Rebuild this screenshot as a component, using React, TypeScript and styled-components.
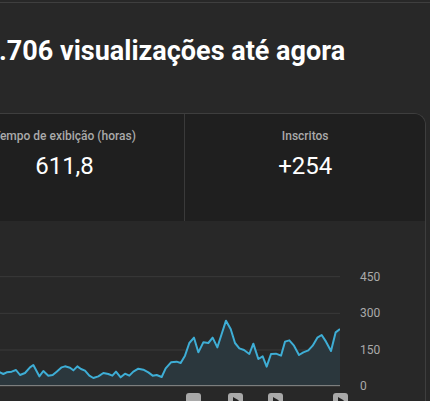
import styled, { createGlobalStyle } from "styled-components";

const GlobalStyle = createGlobalStyle`
  html, body {
    margin: 0;
    background: #282828;
  }
  body {
    font-family: Roboto, "Noto Sans", "Liberation Sans", sans-serif;
    overflow: hidden;
  }
`;

const Page = styled.div`
  width: 430px;
  height: 401px;
  overflow: hidden;
  background: #282828;
`;

const TopRule = styled.div`
  margin-top: 2px;
  border-top: 1px solid #3f3f3f;
`;

// the view is a crop of a wider page, so the column starts off-screen
const Content = styled.main`
  width: 723px;
  margin-left: -297px;
  display: flex;
  flex-direction: column;
`;

const Title = styled.h1`
  margin: 32px 0 46px;
  font-size: 27px;
  line-height: 32px;
  font-weight: 700;
  color: #fff;
  text-align: center;
  white-space: nowrap;
`;

const Card = styled.section`
  border: 1px solid #3e3e3e;
  border-bottom: none;
  border-radius: 12px 12px 0 0;
  overflow: hidden;
`;

const Metrics = styled.div`
  display: flex;
  height: 107px;
  background: #1f1f1f;
`;

const Metric = styled.div`
  flex: 1;
  padding-top: 14px;
  text-align: center;

  & + & {
    border-left: 1px solid #3a3a3a;
  }
`;

const Label = styled.div`
  font-size: 12px;
  line-height: 16px;
  font-weight: 500;
  color: #aaaaaa;
`;

const Value = styled.div`
  margin-top: 6px;
  font-size: 24px;
  line-height: 32px;
  color: #ffffff;
`;

const ChartSection = styled.div`
  display: flex;
  padding: 48px 0 0 24px;
  background: #282828;
`;

const Plot = styled.div`
  display: flex;
  flex-direction: column;
  width: 612px;
`;

const Axis = styled.div`
  display: flex;
  flex-direction: column;
  justify-content: space-between;
  height: 125px;
  margin-left: 20px;
`;

const Tick = styled.span`
  font-size: 12px;
  line-height: 16px;
  color: #aaaaaa;
`;

const MarkerStrip = styled.div`
  position: relative;
  height: 15px;
  margin-top: 6px;
`;

const Marker = styled.div<{ $x: number }>`
  position: absolute;
  top: 0;
  left: ${(p) => p.$x}px;
  width: 15px;
  height: 15px;
  border-radius: 3px;
  background: #a9a9a9;
  display: flex;
  align-items: center;
  justify-content: center;
`;

// chart points in 1/3 px units, x = 0 at the left edge of the window
const points: [number, number][] = [
  [-816, 438], [-780, 432], [-745, 440], [-710, 428], [-675, 436], [-640, 425],
  [-600, 440], [-565, 430], [-530, 436], [-490, 422], [-455, 438], [-420, 430],
  [-385, 442], [-350, 428], [-315, 434], [-280, 420], [-245, 436], [-210, 426],
  [-175, 440], [-140, 428], [-105, 434], [-70, 424], [-35, 438], [-15, 428],
  [0, 430], [10, 435], [20, 430], [35, 428], [48, 423], [60, 438], [75, 432],
  [90, 415], [100, 408], [118, 442], [130, 426], [145, 440], [158, 438],
  [170, 428], [185, 415], [195, 412], [210, 416], [220, 424], [232, 412],
  [243, 420], [255, 425], [268, 440], [280, 447], [295, 442], [310, 432],
  [325, 435], [337, 440], [348, 428], [362, 445], [375, 434], [388, 440],
  [400, 428], [415, 419], [430, 422], [445, 430], [458, 440], [470, 438],
  [485, 444], [497, 418], [513, 400], [530, 398], [542, 402], [555, 380],
  [568, 342], [582, 326], [595, 370], [610, 340], [625, 342], [638, 326],
  [652, 355], [665, 315], [678, 275], [692, 300], [705, 342], [718, 358],
  [732, 363], [748, 375], [760, 344], [775, 390], [788, 382], [800, 413],
  [813, 375], [828, 374], [843, 380], [855, 338], [868, 334], [882, 350],
  [897, 378], [910, 370], [925, 364], [938, 350], [952, 326], [965, 318],
  [978, 338], [993, 366], [1007, 310], [1020, 300],
];

const grid = [143, 253, 363];
const base = 470;

function ViewsChart() {
  const line = points.map(([x, y], i) => `${i ? "L" : "M"}${x} ${y}`).join(" ");
  const area = `${line} L1020 ${base} L-816 ${base} Z`;
  return (
    <svg width="612" height="118" viewBox="-816 120 1836 354">
      {grid.map((y) => (
        <line key={y} x1="-816" x2="1020" y1={y} y2={y} stroke="#3a3a3a" strokeWidth="3" />
      ))}
      <path d={area} fill="#2b373d" />
      <path d={line} fill="none" stroke="#3eaed6" strokeWidth="6" strokeLinejoin="round" />
      <line x1="-816" x2="1020" y1={base} y2={base} stroke="#8c8c8c" strokeWidth="3" />
    </svg>
  );
}

function Play() {
  return (
    <svg width="9" height="9" viewBox="0 0 9 9">
      <path d="M2 1 L8 4.5 L2 8 Z" fill="#222" />
    </svg>
  );
}

const markers = [458, 500, 540, 605];

export default function App() {
  return (
    <Page>
      <GlobalStyle />
      <TopRule />
      <Content>
        <Title>Seu vídeo teve 11.706 visualizações até agora</Title>
        <Card>
          <Metrics>
            <Metric>
              <Label>Visualizações</Label>
              <Value>11,7 mil</Value>
            </Metric>
            <Metric>
              <Label>Tempo de exibição (horas)</Label>
              <Value>611,8</Value>
            </Metric>
            <Metric>
              <Label>Inscritos</Label>
              <Value>+254</Value>
            </Metric>
          </Metrics>
          <ChartSection>
            <Plot>
              <ViewsChart />
              <MarkerStrip>
                {markers.map((x, i) => (
                  <Marker key={x} $x={x}>
                    {i === 0 ? null : <Play />}
                  </Marker>
                ))}
              </MarkerStrip>
            </Plot>
            <Axis>
              <Tick>450</Tick>
              <Tick>300</Tick>
              <Tick>150</Tick>
              <Tick>0</Tick>
            </Axis>
          </ChartSection>
        </Card>
      </Content>
    </Page>
  );
}
